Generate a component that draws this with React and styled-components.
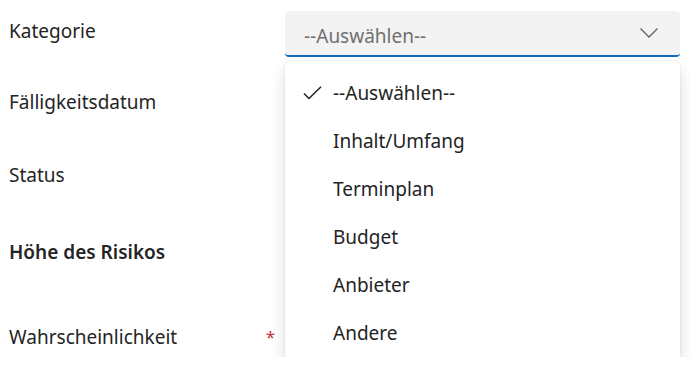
import React from "react";
import styled, { createGlobalStyle } from "styled-components";

const GlobalStyle = createGlobalStyle`
  html, body {
    margin: 0;
    padding: 0;
    background: #ffffff;
    font-family: "Noto Sans", "Open Sans", sans-serif;
    color: #242424;
  }
`;

const Form = styled.div`
  padding: 11px 0 0 9px;
  display: flex;
  flex-direction: column;
`;

const Row = styled.div`
  display: grid;
  grid-template-columns: 276px 395px;
  align-items: start;
  height: ${(p) => p.$h}px;
`;

const Label = styled.div`
  margin-top: 7px;
  font-size: 19px;
  line-height: 26px;
  font-weight: ${(p) => (p.$bold ? 600 : 400)};
  display: flex;
  justify-content: space-between;
  padding-right: 10px;
`;

const Required = styled.span`
  color: #c4314b;
  font-size: 17px;
`;

const Field = styled.div`
  position: relative;
`;

const Select = styled.div`
  height: 44px;
  box-sizing: border-box;
  background: #f3f3f3;
  border-radius: 4px;
  border-bottom: 2px solid #0f6cbd;
  box-sizing: content-box;
  display: flex;
  align-items: center;
  justify-content: space-between;
  padding: 0 22px 0 19px;
  font-size: 19px;
  color: #707070;
  span {
    padding-top: 5px;
  }
`;

const Menu = styled.ul`
  position: absolute;
  top: 50px;
  left: 0;
  right: 0;
  margin: 0;
  padding: 8px 0 3px;
  list-style: none;
  background: #ffffff;
  border-radius: 6px;
  box-shadow: 0 0 2px rgba(0, 0, 0, 0.12), 0 8px 16px rgba(0, 0, 0, 0.14);
`;

const Option = styled.li`
  height: 48px;
  display: flex;
  align-items: center;
  font-size: 19px;
  line-height: 26px;
  color: #242424;
`;

const CheckSlot = styled.span`
  width: 48px;
  display: flex;
  justify-content: flex-start;
  padding-left: 18px;
  box-sizing: border-box;
`;

const options = ["--Auswählen--", "Inhalt/Umfang", "Terminplan", "Budget", "Anbieter", "Andere"];

function Chevron() {
  return (
    <svg width="18" height="10" viewBox="0 0 18 10" fill="none">
      <path d="M0.5 0.5 L9 9 L17.5 0.5" stroke="#616161" strokeWidth="1.3" />
    </svg>
  );
}

function Check() {
  return (
    <svg width="19" height="14" viewBox="0 0 19 14" fill="none">
      <path d="M1 7.5 L6 12.5 L18 0.8" stroke="#242424" strokeWidth="1.6" />
    </svg>
  );
}

export default function App() {
  return (
    <>
      <GlobalStyle />
      <Form>
        <Row $h={71}>
          <Label>Kategorie</Label>
          <Field>
            <Select>
              <span>--Auswählen--</span>
              <Chevron />
            </Select>
            <Menu>
              {options.map((o, i) => (
                <Option key={o}>
                  <CheckSlot>{i === 0 && <Check />}</CheckSlot>
                  {o}
                </Option>
              ))}
            </Menu>
          </Field>
        </Row>
        <Row $h={73}>
          <Label>Fälligkeitsdatum</Label>
        </Row>
        <Row $h={77}>
          <Label>Status</Label>
        </Row>
        <Row $h={85}>
          <Label $bold>Höhe des Risikos</Label>
        </Row>
        <Row $h={40}>
          <Label>
            Wahrscheinlichkeit
            <Required>*</Required>
          </Label>
        </Row>
      </Form>
    </>
  );
}
